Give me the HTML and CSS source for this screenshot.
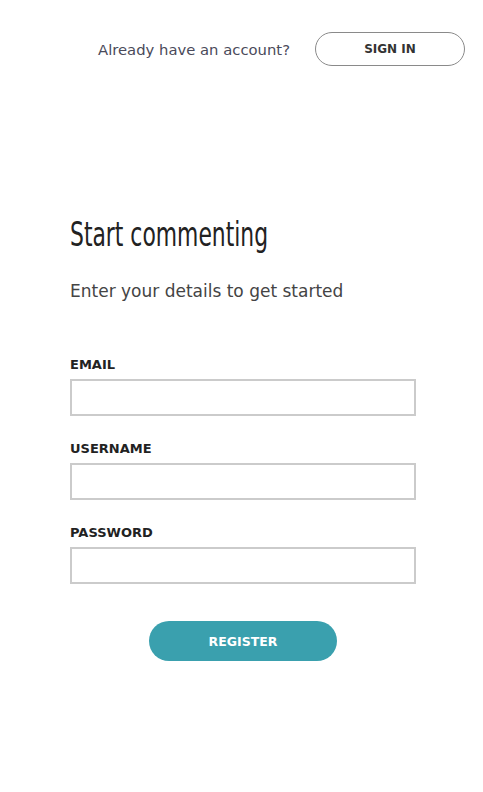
FILE: index.html
```html
<!DOCTYPE html>
<html>
<head>
<meta charset="utf-8">
<link rel="stylesheet" href="styles.css">
</head>
<body>
<header class="top">
  <span class="top-text">Already have an account?</span>
  <button class="signin">SIGN IN</button>
</header>
<main class="form-wrap">
  <h1 class="title">Start commenting</h1>
  <p class="subtitle">Enter your details to get started</p>
  <form class="form">
    <label class="field">
      <span class="label">EMAIL</span>
      <input class="input" type="text">
    </label>
    <label class="field">
      <span class="label">USERNAME</span>
      <input class="input" type="text">
    </label>
    <label class="field">
      <span class="label">PASSWORD</span>
      <input class="input" type="password">
    </label>
    <div class="actions">
      <button type="button" class="register">REGISTER</button>
    </div>
  </form>
</main>
</body>
</html>
```
FILE: styles.css
```css
* { box-sizing: border-box; }
html, body { margin: 0; padding: 0; background: #fff; }
body {
  font-family: "DejaVu Sans", "Open Sans", sans-serif;
  color: #333;
  width: 483px;
  height: 792px;
  overflow: hidden;
}
.top {
  display: flex;
  justify-content: flex-end;
  align-items: center;
  gap: 25px;
  padding: 32px 18px 0 0;
}
.top-text {
  font-size: 14.8px;
  color: #4a4a5a;
}
.signin {
  width: 150px;
  height: 34px;
  border: 1px solid #8a8a8a;
  border-radius: 17px;
  background: #fff;
  font-family: "DejaVu Sans", sans-serif;
  font-weight: bold;
  font-size: 12px;
  color: #333;
  padding: 0;
}
.form-wrap {
  padding: 0 0 0 70px;
  width: 416px;
}
.title {
  display: block;
  width: 300px;
  margin: 148px 0 0 0;
  font-family: "DejaVu Sans Condensed", "DejaVu Sans", sans-serif;
  font-weight: normal;
  font-size: 34px;
  line-height: 40px;
  color: #222;
  white-space: nowrap;
  transform: scaleX(0.715);
  transform-origin: left top;
}
.subtitle {
  margin: 26px 0 0 0;
  font-size: 17px;
  line-height: 22px;
  color: #444;
}
.form {
  margin-top: 55px;
  display: flex;
  flex-direction: column;
}
.field {
  display: flex;
  flex-direction: column;
  margin-bottom: 25px;
}
.label {
  font-size: 13px;
  font-weight: bold;
  color: #222;
  line-height: 16px;
  margin-bottom: 6px;
}
.input {
  width: 346px;
  height: 37px;
  border: 2px solid #cbcbcb;
  border-radius: 0;
  background: #fff;
  outline: none;
  margin: 0;
}
.actions {
  display: flex;
  justify-content: center;
  width: 346px;
  margin-top: 12px;
}
.register {
  width: 188px;
  height: 40px;
  border: none;
  border-radius: 20px;
  background: #3aa0ae;
  color: #fff;
  font-family: "DejaVu Sans", sans-serif;
  font-weight: bold;
  font-size: 12.5px;
  padding: 0;
}
```
